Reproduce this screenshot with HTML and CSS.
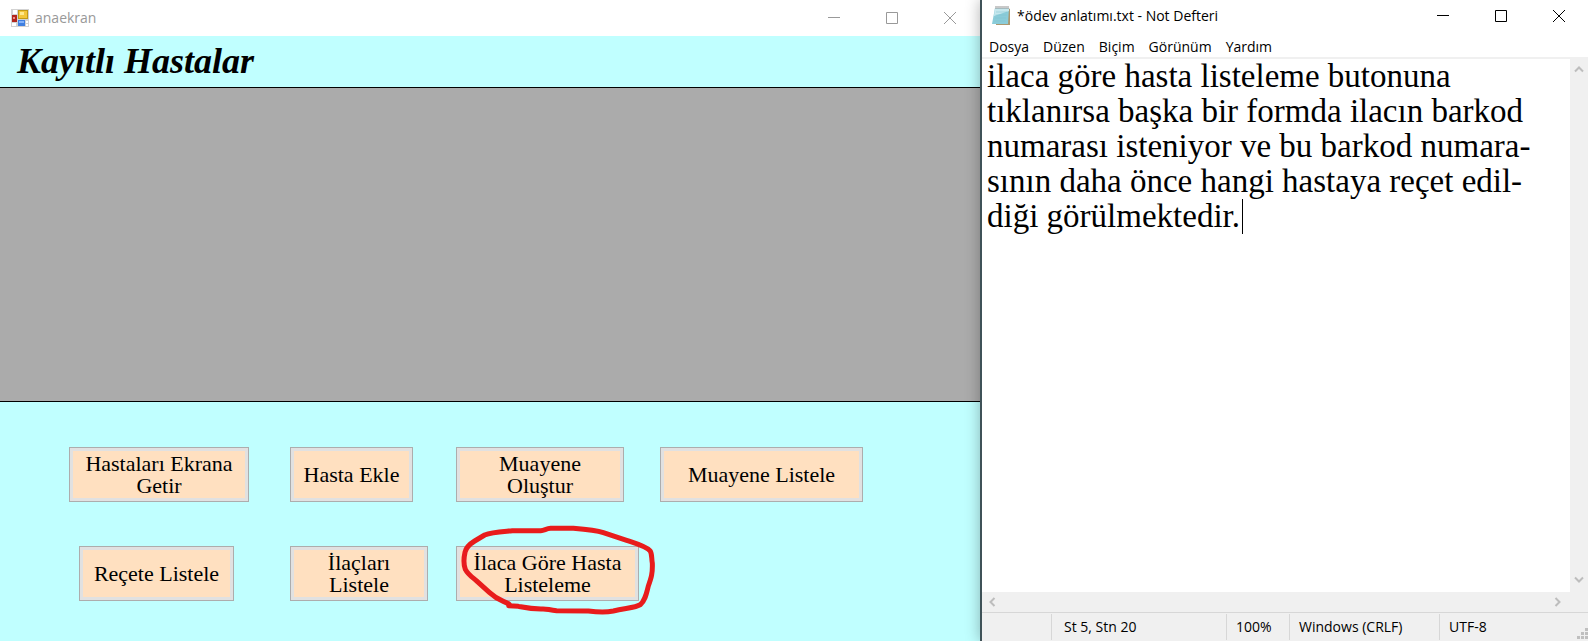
FILE: index.html
```html
<!DOCTYPE html>
<html lang="tr">
<head>
<meta charset="utf-8">
<title>anaekran</title>
<link rel="stylesheet" href="styles.css">
</head>
<body>
<main class="desktop">
  <section class="window form-window">
    <header class="titlebar titlebar-inactive">
      <svg class="app-icon" viewBox="0 0 18 18" width="18" height="18" aria-hidden="true">
        <rect width="18" height="18" fill="#d2d2d2"/>
        <path d="M2 1h4v4H2zM1 14h4v3H1zM15 12h2v2h-2zM15 15h2v2h-2z" fill="#fff"/>
        <rect x="1" y="6" width="5" height="7" fill="#b3261c"/>
        <rect x="2" y="8" width="2" height="2" fill="#ee8e86"/>
        <rect x="7" y="1" width="10" height="9" fill="#c39a16"/>
        <rect x="8" y="2" width="8" height="7" fill="#f3c63a"/>
        <rect x="9" y="3" width="4" height="3" fill="#ffe98e"/>
        <rect x="7" y="11" width="7" height="6" fill="#3f7fe0"/>
        <rect x="8" y="12" width="5" height="2" fill="#83b2fa"/>
      </svg>
      <h1 class="caption">anaekran</h1>
      <div class="window-controls">
        <button type="button" aria-label="Simge durumuna küçült"><svg viewBox="0 0 12 12" width="12" height="12"><path d="M0 5.500h12"/></svg></button>
        <button type="button" aria-label="Ekranı kapla"><svg viewBox="0 0 12 12" width="12" height="12"><path d="M.5.5h11v11H.5z"/></svg></button>
        <button type="button" aria-label="Kapat"><svg viewBox="0 0 12 12" width="12" height="12"><path d="M0 0l12 12M12 0L0 12"/></svg></button>
      </div>
    </header>
    <h2 class="form-heading">Kayıtlı Hastalar</h2>
    <div class="data-grid"></div>
    <div class="actions">
      <button type="button" class="action w-180">Hastaları Ekrana Getir</button>
      <button type="button" class="action w-123">Hasta Ekle</button>
      <button type="button" class="action w-168">Muayene<br>Oluştur</button>
      <button type="button" class="action w-203">Muayene Listele</button>
      <button type="button" class="action w-155">Reçete Listele</button>
      <button type="button" class="action w-138">İlaçları Listele</button>
      <div class="marked">
        <button type="button" class="action w-183">İlaca Göre Hasta Listeleme</button>
        <svg class="marker" viewBox="0 0 690 360" width="230" height="120" aria-hidden="true">
          <path d="M75 127C78 112 86 104 104 93L134 75C155 66 185 65 217 62L302 62C314 61 318 56 332 55L400 55C440 58 470 61 490 68L560 91C590 101 616 108 630 122C637 132 634 145 637 160C638 190 634 203 625 228C619 252 616 270 601 284C588 293 560 294 520 303C495 308 470 306 445 303L350 302C325 300 320 295 303 297C270 297 255 293 235 289L206 287C215 285 205 280 190 274C175 268 160 258 148 247L108 211C92 198 84 193 76 178C70 162 71 145 75 127Z"/>
        </svg>
      </div>
    </div>
  </section>

  <section class="window notepad">
    <header class="titlebar">
      <svg class="app-icon" viewBox="0 0 20 20" width="20" height="20" aria-hidden="true">
        <path d="M17 2l2 1v16H5v-1z" fill="#ab9871"/>
        <path d="M4 2h14l-1 16H1z" fill="#8accd9"/>
        <path d="M4 2h14v3L3 10z" fill="#c6e8ee"/>
        <path d="M5 6h11M4.500 9h11M4 12h11M3.500 15h11" stroke="#7fc0ce" stroke-width=".5"/>
        <path d="M5 0v3M7 0v3M9 0v3M11 0v3M13 0v3M15 0v3M17 0v3" stroke="#777" stroke-width=".8"/>
      </svg>
      <h1 class="caption">*ödev anlatımı.txt - Not Defteri</h1>
      <div class="window-controls">
        <button type="button" aria-label="Simge durumuna küçült"><svg viewBox="0 0 12 12" width="12" height="12"><path d="M0 5.500h12"/></svg></button>
        <button type="button" aria-label="Ekranı kapla"><svg viewBox="0 0 12 12" width="12" height="12"><path d="M.5.5h11v11H.5z"/></svg></button>
        <button type="button" aria-label="Kapat"><svg viewBox="0 0 12 12" width="12" height="12"><path d="M0 0l12 12M12 0L0 12"/></svg></button>
      </div>
    </header>
    <nav class="menubar">
      <button type="button">Dosya</button>
      <button type="button">Düzen</button>
      <button type="button">Biçim</button>
      <button type="button">Görünüm</button>
      <button type="button">Yardım</button>
    </nav>
    <div class="editor">
      <div class="page">
        <textarea class="text" aria-label="Metin" spellcheck="false">ilaca göre hasta listeleme butonuna
tıklanırsa başka bir formda ilacın barkod
numarası isteniyor ve bu barkod numara-
sının daha önce hangi hastaya reçet edil-
diği görülmektedir.</textarea>
        <span class="caret"></span>
      </div>
      <div class="scroll scroll-y">
        <button type="button" aria-label="Yukarı"><svg viewBox="0 0 10 8" width="10" height="8"><path d="M1 6.500l4-4 4 4"/></svg></button>
        <button type="button" aria-label="Aşağı"><svg viewBox="0 0 10 8" width="10" height="8"><path d="M1 1.500l4 4 4-4"/></svg></button>
      </div>
      <div class="scroll scroll-x">
        <button type="button" aria-label="Sola"><svg viewBox="0 0 8 10" width="8" height="10"><path d="M6.500 1l-4 4 4 4"/></svg></button>
        <button type="button" aria-label="Sağa"><svg viewBox="0 0 8 10" width="8" height="10"><path d="M1.500 1l4 4-4 4"/></svg></button>
      </div>
    </div>
    <footer class="statusbar">
      <span class="cell cell-position">St 5, Stn 20</span>
      <span class="cell cell-zoom">100%</span>
      <span class="cell cell-eol">Windows (CRLF)</span>
      <span class="cell cell-encoding">UTF-8</span>
      <svg class="grip" viewBox="0 0 11 11" width="11" height="11" aria-hidden="true"><path d="M8 0h3v3H8zM4 4h3v3H4zM8 4h3v3H8zM0 8h3v3H0zM4 8h3v3H4zM8 8h3v3H8z"/></svg>
    </footer>
  </section>
</main>
</body>
</html>
```
FILE: styles.css
```css
* { box-sizing: border-box; }

body {
  margin: 0;
  font-family: "Open Sans", sans-serif;
  font-size: 14px;
  color: #000;
}

button {
  margin: 0;
  padding: 0;
  border: 0;
  background: none;
  font: inherit;
  color: inherit;
}

h1, h2 { margin: 0; }

.desktop {
  display: flex;
  height: 100vh;
  overflow: hidden;
}

.window {
  display: flex;
  flex-direction: column;
  min-width: 0;
}

.form-window {
  flex: 980 1 0;
  background: #c0ffff;
}

.notepad {
  flex: 606 1 0;
  position: relative;
  border-left: 2px solid #3f5258;
  background: #fff;
  box-shadow: 0 0 14px rgba(0, 0, 0, .3);
}

.titlebar {
  display: flex;
  align-items: center;
  height: 32px;
  padding: 0 0 0 9px;
  background: #fff;
}

.titlebar-inactive {
  height: 36px;
  padding: 0 1px 0 11px;
  color: #999;
}

.app-icon { flex: none; }

.caption {
  flex: 1;
  margin-left: 6px;
  font-size: 14px;
  font-weight: 400;
  line-height: 20px;
  white-space: nowrap;
}

.window-controls {
  display: flex;
  align-self: stretch;
}

.window-controls button {
  display: grid;
  place-items: center;
  width: 58px;
}

.window-controls svg, .scroll svg {
  display: block;
  fill: none;
  stroke: currentColor;
}

.form-heading {
  height: 51px;
  padding-left: 17px;
  font: italic 700 36px/50px "Liberation Serif", serif;
}

.data-grid {
  flex: 1;
  border: solid #000;
  border-width: 1px 0;
  background: #ababab;
}

.actions {
  display: grid;
  grid-template-columns: 221px 166px 204px 1fr;
  row-gap: 44px;
  padding: 45px 0 40px 69px;
}

.action {
  height: 55px;
  padding: 0 8px;
  border: 1px solid #adadad;
  background: #ffe0c0;
  box-shadow: inset 0 0 0 3px #e1e1e1;
  font: 22px/22px "Liberation Serif", serif;
}

.w-123 { width: 123px; }
.w-138 { width: 138px; padding: 0 24px; }
.w-155 { width: 155px; margin-left: 10px; }
.w-168 { width: 168px; }
.w-180 { width: 180px; }
.w-183 { width: 183px; }
.w-203 { width: 203px; }

.marked { position: relative; }

.marker {
  position: absolute;
  left: -16px;
  top: -36px;
  fill: none;
  stroke: #e81c1c;
  stroke-width: 15;
  stroke-linejoin: round;
  pointer-events: none;
}

.menubar {
  display: flex;
  gap: 14px;
  height: 27px;
  padding: 4px 7px 0;
  border-bottom: 2px solid #f0f0f0;
  line-height: 20px;
}

.editor {
  flex: 1;
  display: grid;
  grid-template: 1fr 20px / 1fr 18px;
  min-height: 0;
  background: #f0f0f0;
}

.page {
  position: relative;
  background: #fff;
}

.text {
  display: block;
  width: 100%;
  height: 100%;
  padding: 0 0 0 5px;
  border: 0;
  outline: 0;
  resize: none;
  overflow: hidden;
  background: #fff;
  font: 33px/35px "Liberation Serif", serif;
  white-space: pre;
}

.caret {
  position: absolute;
  left: 260px;
  top: 140px;
  width: 1px;
  height: 35px;
  background: #000;
}

.scroll {
  display: flex;
  justify-content: space-between;
  color: #bdbdbd;
}

.scroll svg { stroke-width: 2; }

.scroll-y {
  flex-direction: column;
  align-items: center;
  padding: 6px 0 8px;
}

.scroll-x {
  align-items: center;
  padding: 0 8px 0 6px;
}

.statusbar {
  display: flex;
  position: relative;
  height: 29px;
  padding: 1px 0 1px 69px;
  border-top: 1px solid #d7d7d7;
  background: #f0f0f0;
  line-height: 26px;
}

.cell {
  border-left: 1px solid #d7d7d7;
  padding-left: 9px;
  white-space: nowrap;
}

.cell-position { width: 175px; padding-left: 12px; }
.cell-zoom { width: 63px; }
.cell-eol { width: 150px; }
.cell-encoding { flex: 1; }

.grip {
  position: absolute;
  right: 0;
  bottom: 2px;
  fill: #bfbfbf;
}
```
